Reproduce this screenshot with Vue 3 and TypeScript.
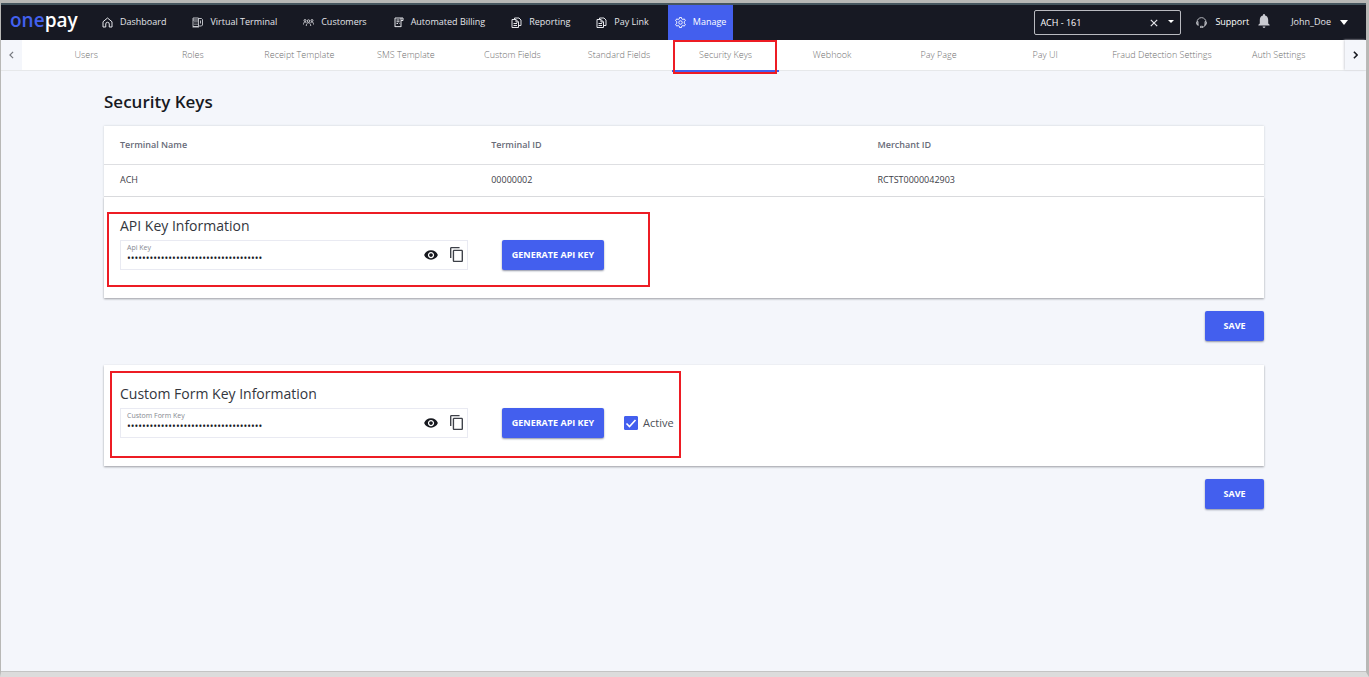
<script setup lang="ts">
import { ref } from 'vue'

interface NavItem {
  label: string
  icon: string
}

interface KeySection {
  id: string
  title: string
  label: string
  hasActive: boolean
}

const navItems: NavItem[] = [
  { label: 'Dashboard', icon: 'home' },
  { label: 'Virtual Terminal', icon: 'terminal' },
  { label: 'Customers', icon: 'people' },
  { label: 'Automated Billing', icon: 'billing' },
  { label: 'Reporting', icon: 'report' },
  { label: 'Pay Link', icon: 'report' },
  { label: 'Manage', icon: 'gear' },
]
const activeNav = ref('Manage')

const tabs: string[] = [
  'Users',
  'Roles',
  'Receipt Template',
  'SMS Template',
  'Custom Fields',
  'Standard Fields',
  'Security Keys',
  'Webhook',
  'Pay Page',
  'Pay UI',
  'Fraud Detection Settings',
  'Auth Settings',
]
const activeTab = ref('Security Keys')

const sections: KeySection[] = [
  { id: 'api', title: 'API Key Information', label: 'Api Key', hasActive: false },
  { id: 'form', title: 'Custom Form Key Information', label: 'Custom Form Key', hasActive: true },
]
const keys = ref<Record<string, string>>({
  api: '00000000-0000-0000-0000-000000000000',
  form: '00000000-0000-0000-0000-000000000000',
})
const visible = ref<Record<string, boolean>>({ api: false, form: false })
const formActive = ref(true)
const terminal = ref('ACH - 161')
</script>

<template>
  <div class="app">
    <header class="topbar">
      <a class="logo" href="#"><span>one</span>pay</a>
      <nav class="nav" aria-label="Main">
        <a
          v-for="item in navItems"
          :key="item.label"
          href="#"
          class="nav-item"
          :class="{ active: item.label === activeNav }"
          @click.prevent="activeNav = item.label"
        >
          <svg class="nav-icon" viewBox="0 0 22 22" aria-hidden="true">
            <g v-if="item.icon === 'home'" stroke-width="2">
              <path d="M2 9.500 11 2l9 7.500V20h-5.500v-6a3.500 3.500 0 0 0-7 0v6H2z" />
            </g>
            <g v-else-if="item.icon === 'terminal'" stroke-width="1.600">
              <path d="M2 2h11v17H2zM2 6h11M5 9h2M9 9h2M5 12h2M9 12h2M5 15h2M9 15h2M1 20h13" />
              <path d="M14 3h5l2 2v11l-2 2h-5M17 7v6" />
            </g>
            <g v-else-if="item.icon === 'people'" stroke-width="1.600">
              <circle cx="4" cy="7" r="2" />
              <circle cx="11" cy="8" r="2.500" />
              <circle cx="18" cy="7" r="2" />
              <path d="M1 15c0-3 1-5 3-5s2.500 1 3 2M21 15c0-3-1-5-3-5s-2.500 1-3 2M6.500 18c0-4 2-6.500 4.500-6.500s4.500 2.500 4.500 6.500" />
            </g>
            <g v-else-if="item.icon === 'billing'" stroke-width="2">
              <path d="M4 20V2h16v5h-4V2M16 7v13l-2-1.500-2 1.500-2-1.500L8 20l-2-1.500L4 20" />
              <path d="M7 6h6M7 9.500h6M7 13h3M12 13h1" />
            </g>
            <g v-else-if="item.icon === 'report'" stroke-width="2">
              <path d="M7 5V2h9l4 4v11h-4" />
              <path d="M2 5h8l5 5v11H2zM10 5v5h5M5 13h7M5 17h7" />
            </g>
            <g v-else stroke-width="1.800">
              <path d="M9 1h4l.6 3 2 1 3-1.200 2.200 3.500-2.300 2v3.400l2.300 2-2.200 3.500-3-1.200-2 1L13 21H9l-.6-3-2-1-3 1.200-2.200-3.500 2.300-2V9.300l-2.300-2 2.200-3.500 3 1.200 2-1z" />
              <circle cx="11" cy="11" r="3.500" />
            </g>
          </svg>
          <span>{{ item.label }}</span>
        </a>
      </nav>

      <div class="tools">
        <div class="picker">
          <select v-model="terminal" aria-label="Terminal">
            <option>ACH - 161</option>
          </select>
          <button type="button" class="clear" aria-label="Clear terminal">
            <svg viewBox="0 0 8 8" aria-hidden="true"><path d="M.8.8l6.400 6.400M7.200.8.8 7.200" /></svg>
          </button>
          <svg class="caret" viewBox="0 0 6 3" aria-hidden="true"><path d="M0 0h6L3 3z" /></svg>
        </div>
        <a class="support" href="#">
          <svg viewBox="0 0 22 22" aria-hidden="true">
            <path d="M5 17a9 9 0 1 1 12 0M4 9c-2 0-3 1.500-3 3.500S2 16 4 16zM18 9c2 0 3 1.500 3 3.500S20 16 18 16zM18 16c0 2.500-2 4-5 4" />
            <path d="M9 18.500h4v3H9z" />
          </svg>
          <span>Support</span>
        </a>
        <button type="button" class="bell" aria-label="Notifications">
          <svg viewBox="0 0 16 20" aria-hidden="true">
            <path d="M8 20a2 2 0 0 0 2-2H6a2 2 0 0 0 2 2zM14 13.500V8.500C14 5.400 12.400 3 9.500 2.200V1.500a1.500 1.500 0 0 0-3 0v.7C3.600 3 2 5.400 2 8.500v5L0 15.500v1h16v-1z" />
          </svg>
        </button>
        <button type="button" class="user">
          <span>John_Doe</span>
          <svg viewBox="0 0 8 5" aria-hidden="true"><path d="M0 0h8L4 5z" /></svg>
        </button>
      </div>
    </header>

    <div class="tabbar">
      <button type="button" class="scroll" aria-label="Previous tabs">
        <svg viewBox="0 0 6 10" aria-hidden="true"><path d="M5 1 1 5l4 4" /></svg>
      </button>
      <nav class="tabs" aria-label="Manage">
        <a
          v-for="tab in tabs"
          :key="tab"
          href="#"
          class="tab"
          :class="{ active: tab === activeTab }"
          @click.prevent="activeTab = tab"
        >{{ tab }}</a>
      </nav>
      <button type="button" class="scroll next" aria-label="Next tabs">
        <svg viewBox="0 0 6 10" aria-hidden="true"><path d="M1 1l4 4-4 4" /></svg>
      </button>
    </div>

    <main class="content">
      <h1>Security Keys</h1>
      <table class="terminals">
        <thead>
          <tr>
            <th scope="col">Terminal Name</th>
            <th scope="col">Terminal ID</th>
            <th scope="col">Merchant ID</th>
          </tr>
        </thead>
        <tbody>
          <tr>
            <td>ACH</td>
            <td>00000002</td>
            <td>RCTST0000042903</td>
          </tr>
        </tbody>
      </table>

      <form v-for="section in sections" :key="section.id" class="section" @submit.prevent>
        <div class="card" :class="section.id">
          <h2>{{ section.title }}</h2>
          <div class="row">
            <div class="field">
              <div class="entry">
                <label :for="section.id + '-key'">{{ section.label }}</label>
                <input
                  :id="section.id + '-key'"
                  v-model="keys[section.id]"
                  :type="visible[section.id] ? 'text' : 'password'"
                  autocomplete="off"
                  readonly
                />
              </div>
              <button
                type="button"
                class="icon-button"
                aria-label="Show key"
                @click="visible[section.id] = !visible[section.id]"
              >
                <svg class="eye" viewBox="1 4 22 16" aria-hidden="true">
                  <path d="M12 4.500C7 4.500 2.730 7.610 1 12c1.730 4.390 6 7.500 11 7.500s9.270-3.110 11-7.500c-1.730-4.390-6-7.500-11-7.500zM12 17c-2.760 0-5-2.240-5-5s2.240-5 5-5 5 2.240 5 5-2.240 5-5 5zm0-8c-1.660 0-3 1.340-3 3s1.340 3 3 3 3-1.340 3-3-1.340-3-3-3z" />
                </svg>
              </button>
              <button type="button" class="icon-button" aria-label="Copy key">
                <svg class="copy" viewBox="2 1 19 22" aria-hidden="true">
                  <path d="M16 1H4c-1.100 0-2 .9-2 2v14h2V3h12V1zm3 4H8c-1.100 0-2 .9-2 2v14c0 1.100.9 2 2 2h11c1.100 0 2-.9 2-2V7c0-1.100-.9-2-2-2zm0 16H8V7h11v14z" />
                </svg>
              </button>
            </div>
            <button type="button" class="primary generate">GENERATE API KEY</button>
            <label v-if="section.hasActive" class="check">
              <input v-model="formActive" type="checkbox" />
              <svg viewBox="0 0 14 14" aria-hidden="true"><path d="M2.500 7.500l3 3 6-6.500" /></svg>
              <span>Active</span>
            </label>
          </div>
        </div>
        <button type="submit" class="primary save">SAVE</button>
      </form>
    </main>
  </div>
</template>

<style>
body {
  margin: 0;
}
</style>

<style scoped>
*,
*::after {
  box-sizing: border-box;
}

.app {
  display: flex;
  flex-direction: column;
  min-height: 100vh;
  border: solid #b8b8b6;
  border-width: 3px 3px 5px 1px;
  border-bottom-color: #dcdcdc;
  background: #f4f6fb;
  box-shadow: inset 0 -1px #c4c4c4;
  color: #23262d;
  font-family: "Open Sans", "Noto Sans", sans-serif;
  font-size: 9px;
}

a {
  color: inherit;
  text-decoration: none;
}

button,
input,
select {
  margin: 0;
  padding: 0;
  border: 0;
  background: none;
  color: inherit;
  font: inherit;
}

button {
  cursor: pointer;
}

svg {
  display: block;
  flex: none;
}

.topbar {
  display: flex;
  align-items: stretch;
  height: 37px;
  border-top: 2px solid #46565f;
  background: #171923;
  color: #e4e5ea;
}

.logo {
  width: 84px;
  padding-left: 9px;
  color: #fff;
  font-size: 19px;
  font-weight: 600;
  line-height: 31px;
}

.logo span {
  color: #4361ee;
}

.nav {
  display: flex;
  gap: 12px;
  margin-left: 10px;
}

.nav-item {
  display: flex;
  align-items: center;
  gap: 7px;
  padding: 0 7px;
  white-space: nowrap;
}

.nav-item span,
.support span,
.user span {
  line-height: 12px;
  padding-bottom: 1px;
}

.nav-item.active {
  background: #435fee;
  color: #fff;
}

.nav-icon {
  width: 11px;
  height: 11px;
  fill: none;
  stroke: currentColor;
}

.tools {
  display: flex;
  align-items: center;
  margin-left: auto;
  padding-right: 18px;
}

.picker {
  position: relative;
  width: 147px;
  height: 25px;
}

.picker select {
  width: 100%;
  height: 100%;
  padding: 0 5px 1px;
  border: 1px solid #b9bac0;
  border-radius: 2px;
  appearance: none;
  color: #fff;
}

.clear {
  position: absolute;
  top: 9px;
  right: 23px;
}

.clear svg {
  width: 8px;
  height: 8px;
  fill: none;
  stroke: #e4e5ea;
  stroke-width: 1.2;
}

.caret {
  position: absolute;
  top: 10px;
  right: 7px;
  width: 6px;
  height: 3px;
  fill: #fff;
}

.support {
  display: flex;
  align-items: center;
  gap: 8px;
  margin-left: 15px;
  color: #fff;
}

.support svg {
  width: 11px;
  height: 11px;
  fill: none;
  stroke: #c5c6cc;
  stroke-width: 1.8;
}

.bell {
  margin-left: 9px;
}

.bell svg {
  width: 12px;
  height: 14px;
  margin-bottom: 3px;
  fill: #c9cad1;
}

.user {
  display: flex;
  align-items: center;
  gap: 9px;
  margin-left: 21px;
}

.user svg {
  width: 8px;
  height: 5px;
  fill: #fff;
}

.tabbar {
  display: flex;
  height: 31px;
  border-bottom: 1px solid #e6e8ea;
  background: #fff;
}

.scroll {
  display: flex;
  align-items: center;
  justify-content: center;
  width: 21px;
  background: #f4f6fb;
}

.scroll svg {
  width: 5px;
  height: 8px;
  fill: none;
  stroke: #777a80;
  stroke-width: 1.5;
}

.scroll.next {
  box-shadow: -1px 0 2px #d5d7dc;
}

.scroll.next svg {
  stroke: #17191f;
  stroke-width: 2;
}

.tabs {
  display: grid;
  flex: 1;
  grid-template-columns: repeat(10, 1fr) 127px 1fr;
  padding: 0 13px 0 11px;
}

.tab {
  position: relative;
  color: #6f6f6f;
  font-weight: 300;
  line-height: 30px;
  text-align: center;
  white-space: nowrap;
}

.tab.active {
  border-bottom: 2px solid #435fee;
}

.tab.active::after {
  position: absolute;
  inset: 0 2px -4px 1px;
  border: 2px solid #ed1c24;
  content: "";
}

.content {
  padding: 20px 102px 28px 103px;
}

h1 {
  margin: 0 0 13px;
  color: #17191f;
  font-size: 17px;
  font-weight: 600;
  line-height: 22px;
}

.terminals {
  width: 100%;
  border-collapse: collapse;
  background: #fff;
  box-shadow: 0 0 2px #c9ccd2;
  table-layout: fixed;
  text-align: left;
}

th,
td {
  height: 32px;
  padding: 0 0 1px 16px;
  border-bottom: 1px solid #dedfe2;
  color: #3d4048;
}

th {
  height: 38px;
  padding-bottom: 0;
  color: #676b78;
  font-weight: 600;
}

th:first-child {
  width: 32%;
}

th:nth-child(2) {
  width: 33.3%;
}

.section {
  display: flex;
  flex-direction: column;
  align-items: flex-end;
  margin-bottom: 24px;
}

.card {
  position: relative;
  width: 100%;
  margin-bottom: 13px;
  padding: 18px 16px 28px;
  background: #fff;
  box-shadow: 0 1px 2px #9a9ca1;
}

.card::after {
  position: absolute;
  top: 15px;
  left: 3px;
  width: 543px;
  height: 75px;
  border: 2px solid #ed1c24;
  content: "";
  pointer-events: none;
}

.card.form::after {
  top: 6px;
  left: 6px;
  width: 571px;
  height: 87px;
}

h2 {
  margin: 0 0 3px;
  color: #33363d;
  font-size: 14px;
  font-weight: 400;
  line-height: 22px;
}

.row {
  display: flex;
  align-items: center;
}

.field {
  display: flex;
  align-items: center;
  width: 348px;
  height: 30px;
  padding: 0 4px 0 6px;
  border: 1px solid #e9eaf2;
}

.entry {
  display: flex;
  flex: 1;
  flex-direction: column;
  padding-bottom: 3px;
}

.entry label {
  color: #858891;
  font-size: 7px;
  line-height: 10px;
}

.entry input {
  height: 10px;
  outline: 0;
  color: #17191f;
  font-size: 10px;
  line-height: 10px;
}

.icon-button {
  margin-left: 12px;
}

.eye {
  width: 14px;
  height: 10px;
  fill: #17191f;
}

.copy {
  width: 13px;
  height: 15px;
  fill: #3d4048;
}

.primary {
  height: 30px;
  border-radius: 2px;
  background: #435fee;
  box-shadow: 0 1px 2px #8f93a5;
  color: #fff;
  font-size: 9px;
  font-weight: 700;
}

.generate {
  width: 102px;
  margin-left: 34px;
}

.save {
  width: 59px;
}

.check {
  position: relative;
  display: flex;
  align-items: center;
  gap: 5px;
  margin-left: 20px;
  color: #4c4f56;
  font-size: 11px;
}

.check input {
  width: 14px;
  height: 14px;
  border: 1px solid #435fee;
  border-radius: 1px;
  appearance: none;
}

.check input:checked {
  background: #435fee;
}

.check svg {
  position: absolute;
  left: 0;
  width: 14px;
  height: 14px;
  fill: none;
  pointer-events: none;
  stroke: #fff;
  stroke-width: 1.6;
}
</style>
